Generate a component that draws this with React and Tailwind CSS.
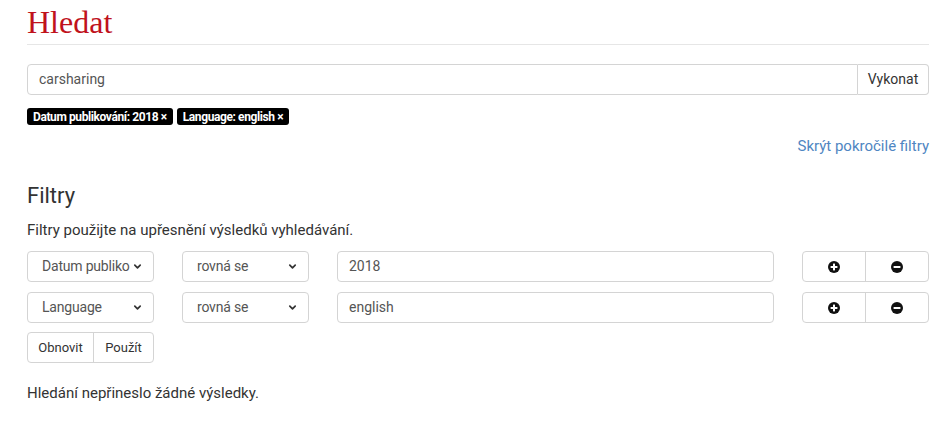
import React from "react";

const ChevronDown = () => (
  <svg width="9" height="9" viewBox="0 0 10 10" className="shrink-0">
    <path d="M2 3.5 L5 6.5 L8 3.5" fill="none" stroke="#333" strokeWidth="1.9" strokeLinecap="round" strokeLinejoin="round" />
  </svg>
);

const PlusCircle = () => (
  <svg width="12" height="12" viewBox="0 0 12 12">
    <circle cx="6" cy="6" r="6" fill="#111" />
    <rect x="5" y="2.6" width="2" height="6.8" fill="#fff" />
    <rect x="2.6" y="5" width="6.8" height="2" fill="#fff" />
  </svg>
);

const MinusCircle = () => (
  <svg width="12" height="12" viewBox="0 0 12 12">
    <circle cx="6" cy="6" r="6" fill="#111" />
    <rect x="2.6" y="5" width="6.8" height="2" fill="#fff" />
  </svg>
);

const Select = ({ label }) => (
  <div className="w-[127px] h-[31px] border border-[#d4d4d4] rounded-[4px] flex items-center pl-[14px] pr-[11px] text-[14px] text-[#555] bg-white">
    <span className="flex-1 min-w-0 whitespace-nowrap tracking-[-0.2px]">{label}</span>
    <ChevronDown />
  </div>
);

const FilterRow = ({ field, value }) => (
  <div className="flex items-center h-[31px]">
    <Select label={field} />
    <div className="w-[28px]" />
    <Select label="rovná se" />
    <div className="w-[28px]" />
    <div className="flex-1 h-[31px] border border-[#d4d4d4] rounded-[4px] flex items-center px-[11px] text-[14px] text-[#555] bg-white">
      {value}
    </div>
    <div className="w-[28px]" />
    <div className="flex w-[127px] h-[31px] border border-[#d4d4d4] rounded-[4px] bg-white">
      <div className="w-[63px] flex items-center justify-center border-r border-[#d4d4d4]">
        <PlusCircle />
      </div>
      <div className="flex-1 flex items-center justify-center">
        <MinusCircle />
      </div>
    </div>
  </div>
);

const Tag = ({ children }) => (
  <span className="inline-flex items-center h-[17px] px-[6px] bg-black text-white text-[12px] font-bold rounded-[3px] leading-none tracking-[-0.4px]">
    {children} ×
  </span>
);

export default function App() {
  return (
    <div className="w-[945px] h-[444px] bg-white pl-[27px] pr-[16px] text-[#333]" style={{ fontFamily: "Roboto, 'Liberation Sans', sans-serif" }}>
      <h1 className="pt-[4px] text-[32px] leading-[36px] text-[#c0121c]" style={{ fontFamily: "'Liberation Serif', serif", fontWeight: 400 }}>
        Hledat
      </h1>
      <div className="mt-[4px] border-t border-[#e6e6e6]" />

      <div className="mt-[19px] flex h-[31px]">
        <div className="flex-1 border border-[#d4d4d4] rounded-l-[4px] flex items-center px-[11px] text-[14px] text-[#555]">
          carsharing
        </div>
        <div className="w-[71px] border border-l-0 border-[#d4d4d4] rounded-r-[4px] flex items-center justify-center text-[14px] text-[#333]">
          Vykonat
        </div>
      </div>

      <div className="mt-[13px] flex gap-[4px]">
        <Tag>Datum publikování: 2018</Tag>
        <Tag>Language: english</Tag>
      </div>

      <div className="mt-[11px] flex justify-end text-[15px] leading-[20px] text-[#4f86c2]">
        Skrýt pokročilé filtry
      </div>

      <h2 className="mt-[26px] text-[22px] leading-[28px] text-[#333]">Filtry</h2>
      <p className="mt-[10px] text-[15px] leading-[20px] text-[#333]">
        Filtry použijte na upřesnění výsledků vyhledávání.
      </p>

      <div className="mt-[11px] flex flex-col gap-[10px]">
        <FilterRow field="Datum publiko" value="2018" />
        <FilterRow field="Language" value="english" />
      </div>

      <div className="mt-[9px] flex w-[127px] h-[31px] border border-[#d4d4d4] rounded-[4px] text-[13px] text-[#333]">
        <div className="w-[66px] flex items-center justify-center border-r border-[#d4d4d4]">Obnovit</div>
        <div className="flex-1 flex items-center justify-center">Použít</div>
      </div>

      <p className="mt-[20px] text-[15px] leading-[20px] text-[#333]">
        Hledání nepřineslo žádné výsledky.
      </p>
    </div>
  );
}
